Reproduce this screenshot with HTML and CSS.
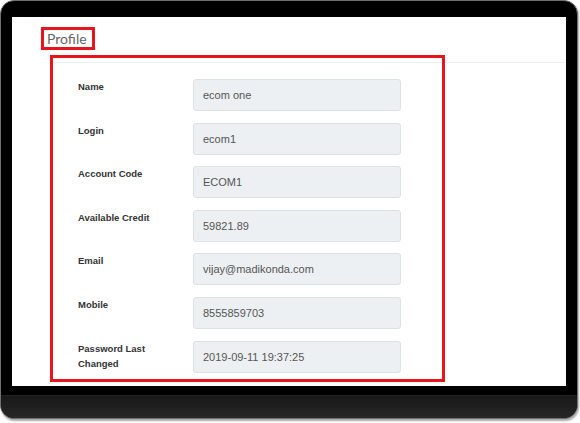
FILE: index.html
```html
<!DOCTYPE html>
<html lang="en">
<head>
    <meta charset="UTF-8">
    <meta name="viewport" content="width=device-width, initial-scale=1.0">
    <title>Profile</title>

    <link rel="stylesheet" href="styles.css">
</head>
<body>
    <div class="device">
        <div class="screen">
            <h1 class="page-title">Profile</h1>

            <div class="profile-box">
                <div class="field">
                    <label>Name</label>
                    <div class="value">ecom one</div>
                </div>
                <div class="field">
                    <label>Login</label>
                    <div class="value">ecom1</div>
                </div>
                <div class="field">
                    <label>Account Code</label>
                    <div class="value">ECOM1</div>
                </div>
                <div class="field">
                    <label>Available Credit</label>
                    <div class="value">59821.89</div>
                </div>
                <div class="field">
                    <label>Email</label>
                    <div class="value">vijay@madikonda.com</div>
                </div>
                <div class="field">
                    <label>Mobile</label>
                    <div class="value">8555859703</div>
                </div>
                <div class="field">
                    <label>Password Last Changed</label>
                    <div class="value">2019-09-11 19:37:25</div>
                </div>
            </div>
        </div>
        <div class="chin"></div>
    </div>
</body>
</html>
```

FILE: styles.css
```css
/* Reset some default styles */
body, h1 {
    margin: 0;
    padding: 0;
}

body {
    width: 580px;
    height: 423px;
    background: #fff;
    font-family: "Liberation Sans", Arial, sans-serif;
}

/* Tablet frame round the screenshot */
.device {
    width: 578px;
    height: 419px;
    box-sizing: border-box;
    border: 1px solid #707070;
    border-radius: 14px;
    background: #000;
    display: flex;
    flex-direction: column;
    overflow: hidden;
    box-shadow: 1px 2px 2px #a8a8a8;
}

.screen {
    margin: 16px 11px 0;
    height: 369px;
    padding: 10px 0 0 29px;
    box-sizing: border-box;
    background-color: #fff;
    /* header divider under the title */
    background-image: linear-gradient(#eceeef, #eceeef);
    background-repeat: no-repeat;
    background-position: 38px 45px;
    background-size: calc(100% - 38px) 1px;
}

.chin {
    margin-top: 9px;
    flex: 1;
    background: linear-gradient(#181818, #272727);
    border-top: 1px solid #222;
}

.page-title {
    display: inline-block;
    height: 23px;
    padding: 0 5px 0 3px;
    box-sizing: border-box;
    border: 3px solid #e8141c;
    font-family: Lato, "Open Sans", sans-serif;
    font-size: 14px;
    font-weight: 400;
    line-height: 17px;
    color: #666;
}

/* Highlighted profile details */
.profile-box {
    width: 395px;
    height: 327px;
    margin: 5px 0 0 9px;
    padding: 21px 0 0 25px;
    box-sizing: border-box;
    border: 3px solid #e8141c;
    display: flex;
    flex-direction: column;
    gap: 11.6px;
}

.field {
    display: grid;
    grid-template-columns: 80px 208px;
    column-gap: 35px;
    align-items: start;
}

.field label {
    font-size: 9.5px;
    font-weight: bold;
    line-height: 15px;
    color: #333;
}

.value {
    height: 32px;
    box-sizing: border-box;
    padding: 0 9px;
    border: 1px solid #dde2e5;
    border-radius: 3px;
    background: #edf0f2;
    font-size: 11px;
    line-height: 30px;
    color: #555;
}
```
